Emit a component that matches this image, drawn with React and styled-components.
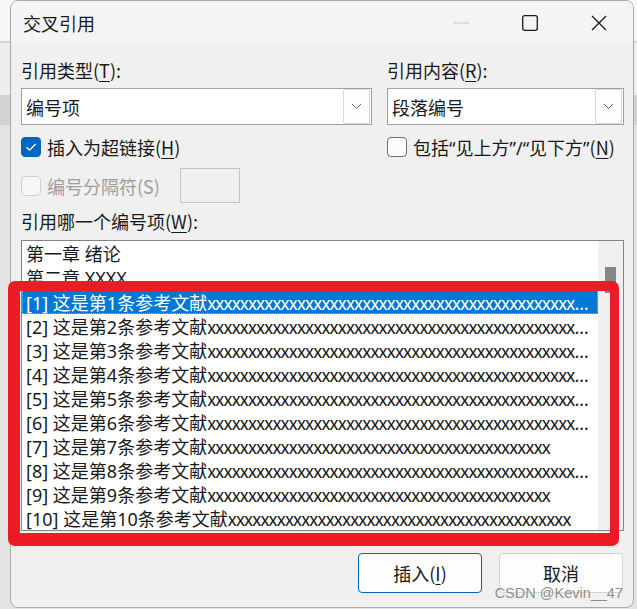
import React from 'react';
import styled, { createGlobalStyle } from 'styled-components';

const GlobalStyle = createGlobalStyle`
  html, body { margin: 0; padding: 0; }
  body {
    width: 637px;
    height: 609px;
    overflow: hidden;
    font-family: "Noto Sans CJK SC", "Noto Sans", sans-serif;
    background: linear-gradient(to bottom,
      #f7f7f7 0, #f7f7f7 41px,
      #d6d6d6 41px, #d6d6d6 43px,
      #eeeeee 43px, #eeeeee 95px,
      #d2d2d2 95px, #d2d2d2 125px,
      #e4e4e4 125px);
  }
`;

const Window = styled.div`
  position: relative;
  box-sizing: border-box;
  margin-left: 10px;
  width: 624px;
  height: 608px;
  background: #f0f0f0;
  border: 1px solid #a9a9a9;
  border-radius: 8px;
  display: flex;
  flex-direction: column;
  color: #1a1a1a;
`;

const TitleBar = styled.div`
  height: 43px;
  flex: none;
  display: flex;
  align-items: center;
  background: #f3f4f6;
  border-radius: 7px 7px 0 0;
`;

const Title = styled.div`
  padding-left: 12px;
  font-size: 18px;
  line-height: 24px;
`;

const Controls = styled.div`
  margin-left: auto;
  display: flex;
  height: 100%;
`;

const ControlButton = styled.div`
  width: 69px;
  height: 100%;
  display: flex;
  align-items: center;
  justify-content: center;
`;

const Body = styled.div`
  flex: 1;
  display: flex;
  flex-direction: column;
  padding: 14px 9px 0 10px;
`;

const Columns = styled.div`
  display: grid;
  grid-template-columns: 351px minmax(0, 1fr);
  column-gap: 15px;
`;

const Field = styled.div`
  display: flex;
  flex-direction: column;
  min-width: 0;
`;

const Label = styled.div`
  font-size: 18px;
  line-height: 24px;
  height: 24px;
  white-space: nowrap;
  margin-top: ${p => p.$top || 0}px;
  color: ${p => (p.$disabled ? '#9d9d9d' : '#1a1a1a')};
`;

const Key = styled.span`
  text-decoration: underline;
  text-underline-offset: 3px;
  text-decoration-thickness: 1px;
`;

const Quote = styled.span`
  font-family: "Noto Sans", sans-serif;
`;

const Combo = styled.div`
  margin-top: 6px;
  box-sizing: border-box;
  height: 37px;
  display: flex;
  align-items: center;
  background: #fff;
  border: 1px solid #a2a2a2;
  padding: 0 1px 0 4px;
`;

const ComboText = styled.div`
  flex: 1;
  font-size: 18px;
  line-height: 24px;
`;

const DropButton = styled.div`
  box-sizing: border-box;
  width: 27px;
  height: 35px;
  display: flex;
  align-items: center;
  justify-content: center;
  border: 1px solid #d9d9d9;
  border-radius: 2px;
  background: #fdfdfd;
`;

const CheckRow = styled.div`
  margin-top: ${p => p.$top}px;
  display: flex;
  align-items: center;
  height: ${p => p.$height || 24}px;
  gap: 6px;
`;

const Box = styled.div`
  box-sizing: border-box;
  width: 20px;
  height: 20px;
  border-radius: 4px;
  flex: none;
  display: flex;
  align-items: center;
  justify-content: center;
  background: ${p => (p.$checked ? '#0067c0' : p.$disabled ? '#f6f6f6' : '#fbfbfb')};
  border: 1px solid ${p => (p.$checked ? '#0067c0' : p.$disabled ? '#cfcfcf' : '#6e6e6e')};
`;

const SepInput = styled.div`
  box-sizing: border-box;
  margin-left: 14px;
  width: 60px;
  height: 35px;
  border: 1px solid #c4c4c4;
  background: #f0f0f0;
`;

const ListBox = styled.div`
  margin-top: 7px;
  box-sizing: border-box;
  height: 291px;
  width: 603px;
  border: 1px solid #838383;
  background: #fff;
  display: flex;
`;

const Items = styled.div`
  flex: 1;
  min-width: 0;
  padding-top: 1px;
`;

const Item = styled.div`
  box-sizing: border-box;
  height: 24px;
  line-height: 24px;
  font-size: 18px;
  font-family: "Noto Sans", "Noto Sans CJK SC", sans-serif;
  padding: 0 3px 0 4px;
  white-space: nowrap;
  overflow: hidden;
  text-overflow: ellipsis;
  color: ${p => (p.$selected ? '#fff' : '#1a1a1a')};
  background: ${p => (p.$selected ? '#0078d7' : 'transparent')};
  outline: ${p => (p.$selected ? '1px dotted #f4a13c' : 'none')};
  outline-offset: -1px;
`;

const Filler = styled.span`
  font-family: "Noto Sans CJK SC", sans-serif;
  letter-spacing: -0.8px;
`;

const ScrollTrack = styled.div`
  width: 25px;
  flex: none;
  background: #f0f0f0;
  display: flex;
  flex-direction: column;
  align-items: center;
`;

const Thumb = styled.div`
  margin-top: 26px;
  width: 11px;
  height: 26px;
  background: #868686;
`;

const Footer = styled.div`
  margin-top: 22px;
  display: flex;
  justify-content: flex-end;
  gap: 17px;
  padding-right: 1px;
`;

const Button = styled.div`
  box-sizing: border-box;
  width: 124px;
  height: 40px;
  display: flex;
  align-items: center;
  justify-content: center;
  font-size: 18px;
  border-radius: 4px;
  background: #fdfdfd;
  border: 1px solid ${p => (p.$primary ? '#0067c0' : '#d3d3d3')};
`;

const Highlight = styled.div`
  position: absolute;
  box-sizing: border-box;
  left: -3px;
  top: 280px;
  width: 611px;
  height: 265px;
  border-style: solid;
  border-color: #ed1c24;
  border-width: 10px 9px 13px 12px;
  border-radius: 7px;
  pointer-events: none;
`;

const Watermark = styled.div`
  position: absolute;
  right: 10px;
  bottom: 6px;
  font-family: "Liberation Sans", Arial, sans-serif;
  font-size: 14.5px;
  line-height: 16px;
  color: rgba(110, 110, 110, 0.8);
  text-shadow: 0 0 1px rgba(255, 255, 255, 0.8);
`;

const Check = () => (
  <svg width="14" height="14" viewBox="0 0 14 14">
    <path d="M2.5 7.2 L5.6 10.2 L11.6 4" fill="none" stroke="#fff" strokeWidth="1.3" />
  </svg>
);

const Chevron = () => (
  <svg width="11" height="7" viewBox="0 0 11 7">
    <path d="M1 1 L5.5 5.5 L10 1" fill="none" stroke="#5c5c5c" strokeWidth="1" />
  </svg>
);

const refs = [1, 2, 3, 4, 5, 6, 7, 8, 9, 10].map(n => ({
  n,
  fill: 'x'.repeat([7, 9, 10].includes(n) ? 42 : 70),
}));

export default function App() {
  return (
    <>
      <GlobalStyle />
      <Window>
        <TitleBar>
          <Title>交叉引用</Title>
          <Controls>
            <ControlButton>
              <svg width="16" height="2" viewBox="0 0 16 2">
                <path d="M0 1 H16" stroke="#c6c6c6" strokeWidth="1" />
              </svg>
            </ControlButton>
            <ControlButton>
              <svg width="16" height="16" viewBox="0 0 16 16">
                <rect x="0.7" y="0.7" width="14.6" height="14.6" rx="2" fill="none" stroke="#1a1a1a" strokeWidth="1.3" />
              </svg>
            </ControlButton>
            <ControlButton>
              <svg width="16" height="16" viewBox="0 0 16 16">
                <path d="M1 1 L15 15 M15 1 L1 15" stroke="#1a1a1a" strokeWidth="1.3" />
              </svg>
            </ControlButton>
          </Controls>
        </TitleBar>

        <Body>
          <Columns>
            <Field>
              <Label>引用类型(<Key>T</Key>):</Label>
              <Combo>
                <ComboText>编号项</ComboText>
                <DropButton><Chevron /></DropButton>
              </Combo>
              <CheckRow $top={10}>
                <Box $checked><Check /></Box>
                <Label>插入为超链接(<Key>H</Key>)</Label>
              </CheckRow>
            </Field>
            <Field>
              <Label>引用内容(<Key>R</Key>):</Label>
              <Combo>
                <ComboText>段落编号</ComboText>
                <DropButton><Chevron /></DropButton>
              </Combo>
              <CheckRow $top={10}>
                <Box />
                <Label>
                  包括<Quote>“</Quote>见上方<Quote>”/“</Quote>见下方<Quote>”</Quote>(<Key>N</Key>)
                </Label>
              </CheckRow>
            </Field>
          </Columns>

          <CheckRow $top={9} $height={35}>
            <Box $disabled />
            <Label $disabled>编号分隔符(S)</Label>
            <SepInput />
          </CheckRow>

          <Label $top={6}>引用哪一个编号项(<Key>W</Key>):</Label>

          <ListBox>
            <Items>
              <Item>第一章 绪论</Item>
              <Item>第二章 XXXX</Item>
              {refs.map(r => (
                <Item key={r.n} $selected={r.n === 1}>
                  [{r.n}] 这是第{r.n}条参考文献<Filler>{r.fill}</Filler>
                </Item>
              ))}
            </Items>
            <ScrollTrack>
              <Thumb />
            </ScrollTrack>
          </ListBox>

          <Footer>
            <Button $primary>插入(<Key>I</Key>)</Button>
            <Button>取消</Button>
          </Footer>
        </Body>

        <Highlight />
        <Watermark>CSDN @Kevin__47</Watermark>
      </Window>
    </>
  );
}
